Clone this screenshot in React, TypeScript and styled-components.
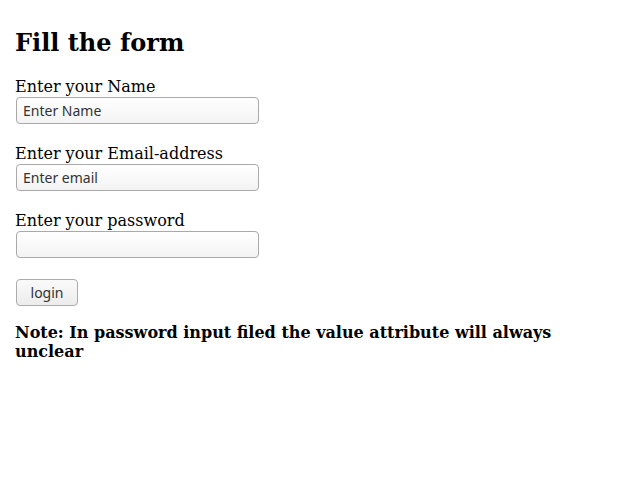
import React from "react";
import styled, { createGlobalStyle } from "styled-components";

const Global = createGlobalStyle`
  html, body { margin: 0; padding: 0; background: #ffffff; }
  body {
    padding: 8px;
    font-family: "DejaVu Serif", serif;
    font-size: 16px;
    color: #000;
  }
`;

const Page = styled.div`
  display: flex;
  flex-direction: column;
  align-items: flex-start;
`;

const Title = styled.h2`
  margin: 21px 0 20px 7px;
  font-size: 24px;
  font-weight: bold;
  line-height: 28px;
`;

const Form = styled.form`
  display: flex;
  flex-direction: column;
  align-items: flex-start;
  gap: 20px;
  margin: 0;
`;

const Field = styled.div`
  display: flex;
  flex-direction: column;
  align-items: flex-start;
  gap: 1px;
`;

const Label = styled.label`
  margin-left: 7px;
  line-height: 19px;
`;

const Input = styled.input`
  box-sizing: border-box;
  margin-left: 8px;
  width: 243px;
  height: 27px;
  padding: 0 6px;
  border: 1px solid #a9a9a9;
  border-radius: 4px;
  background: linear-gradient(#ffffff, #f3f3f3);
  font-family: "Noto Sans", "DejaVu Sans", sans-serif;
  font-size: 14px;
  color: #222;
  outline: none;
  &::placeholder { color: #333; opacity: 1; }
`;

const Button = styled.button`
  box-sizing: border-box;
  margin: 1px 0 0 8px;
  width: 62px;
  height: 27px;
  border: 1px solid #acacac;
  border-radius: 4px;
  background: linear-gradient(#fafafa, #ececec);
  font-family: "Noto Sans", "DejaVu Sans", sans-serif;
  font-size: 14px;
  color: #333;
  padding: 0;
`;

const Note = styled.h4`
  margin: 17px 0 0 7px;
  font-size: 16px;
  font-weight: bold;
  line-height: 19px;
  max-width: 616px;
`;

export default function App() {
  return (
    <>
      <Global />
      <Page>
        <Title>Fill the form</Title>
        <Form onSubmit={(e) => e.preventDefault()}>
          <Field>
            <Label>Enter your Name</Label>
            <Input type="text" placeholder="Enter Name" />
          </Field>
          <Field>
            <Label>Enter your Email-address</Label>
            <Input type="email" placeholder="Enter email" />
          </Field>
          <Field>
            <Label>Enter your password</Label>
            <Input type="password" />
          </Field>
          <Button type="submit">login</Button>
        </Form>
        <Note>Note: In password input filed the value attribute will always unclear</Note>
      </Page>
    </>
  );
}
